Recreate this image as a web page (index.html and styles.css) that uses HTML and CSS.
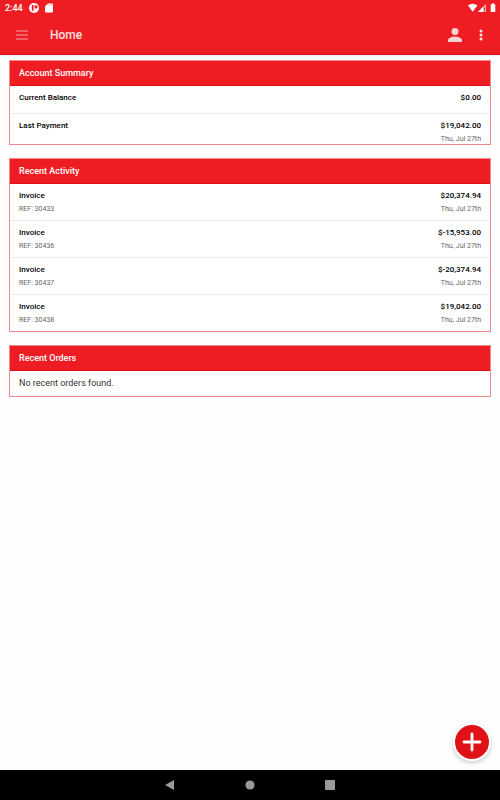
FILE: index.html
```html
<!DOCTYPE html>
<html lang="en">
<head>
<meta charset="utf-8">
<meta name="viewport" content="width=device-width, initial-scale=1">
<title>Home</title>
<link rel="stylesheet" href="styles.css">
</head>
<body>
<header class="top">
  <div class="status">
    <span class="time">2:44</span>
    <svg class="status-app" width="10" height="10" viewBox="0 0 10 10" aria-hidden="true"><circle cx="5" cy="5" r="5" fill="#fff"/><path d="M2.800 2h1.800v6A3 3 0 0 1 2.800 7zM5.600 2.200H7a1.700 1.700 0 0 1 0 3.400H5.600z" fill="#ee1d23"/></svg>
    <svg class="status-card" width="8" height="10" viewBox="0 0 8 10" aria-hidden="true"><path d="M3 .5h4a1 1 0 0 1 1 1v7a1 1 0 0 1-1 1H1a1 1 0 0 1-1-1v-5z" fill="#fff"/><path d="M3 1.500v1.500M4.800 1.500v1.500M6.500 1.500v1.500" stroke="#f6a0a2" stroke-width=".7"/></svg>
    <svg class="status-right" width="28" height="10" viewBox="0 0 28 10" aria-hidden="true">
      <path d="M0 2.600Q4.700-.9 9.400 2.600L4.700 8.800z" fill="#fff"/>
      <path d="M10 9 18 1v8z" fill="#f8b0b2"/><path d="M10 9l5-5v5z" fill="#fff"/><path d="M16.500 4.500v2M16.500 7.500v1" stroke="#8b3a3c" stroke-width="1"/>
      <path d="M24 .3h2v.9h1.300v7.800h-4.600V1.200H24z" fill="#fff"/>
    </svg>
  </div>
  <div class="bar">
    <button class="icon-btn" aria-label="Menu"><svg width="12" height="10" viewBox="0 0 12 10"><path d="M0 1h12M0 5h12M0 9h12" stroke="#f8a5a7" stroke-width="1"/></svg></button>
    <h1>Home</h1>
    <button class="icon-btn" aria-label="Account"><svg width="14" height="14" viewBox="0 0 14 14" fill="#fbd2d3"><circle cx="7" cy="3.500" r="3.500"/><path d="M0 14v-1.800C0 9.800 4.700 8.600 7 8.600s7 1.200 7 3.600V14z"/></svg></button>
    <button class="icon-btn" aria-label="More options"><svg width="4" height="12" viewBox="0 0 4 12" fill="#fde4e4"><circle cx="2" cy="2" r="1.500"/><circle cx="2" cy="6" r="1.500"/><circle cx="2" cy="10" r="1.500"/></svg></button>
  </div>
</header>
<main>
  <section class="card">
    <h2>Account Summary</h2>
    <div class="row single"><div class="line"><span>Current Balance</span><span>$0.00</span></div></div>
    <div class="row tight"><div class="line"><span>Last Payment</span><span>$19,042.00</span></div><div class="meta"><span></span><span>Thu, Jul 27th</span></div></div>
  </section>
  <section class="card">
    <h2>Recent Activity</h2>
    <div class="row"><div class="line"><span>Invoice</span><span>$20,374.94</span></div><div class="meta"><span>REF: 30433</span><span>Thu, Jul 27th</span></div></div>
    <div class="row"><div class="line"><span>Invoice</span><span>$-15,953.00</span></div><div class="meta"><span>REF: 30436</span><span>Thu, Jul 27th</span></div></div>
    <div class="row"><div class="line"><span>Invoice</span><span>$-20,374.94</span></div><div class="meta"><span>REF: 30437</span><span>Thu, Jul 27th</span></div></div>
    <div class="row"><div class="line"><span>Invoice</span><span>$19,042.00</span></div><div class="meta"><span>REF: 30438</span><span>Thu, Jul 27th</span></div></div>
  </section>
  <section class="card">
    <h2>Recent Orders</h2>
    <p>No recent orders found.</p>
  </section>
  <button class="fab" aria-label="Add"><svg width="20" height="20" viewBox="0 0 20 20"><path d="M10 2v16M2 10h16" stroke="#fff" stroke-width="2.800" stroke-linecap="round"/></svg></button>
</main>
<nav class="system" aria-label="System navigation">
  <button aria-label="Back"><svg width="10" height="10" viewBox="0 0 10 10"><path d="M9 0v10L0 5z" fill="#999"/></svg></button>
  <button aria-label="Home screen"><svg width="10" height="10" viewBox="0 0 10 10"><circle cx="5" cy="5" r="4.600" fill="#999"/></svg></button>
  <button aria-label="Recent apps"><svg width="10" height="10" viewBox="0 0 10 10"><rect width="10" height="10" rx=".8" fill="#999"/></svg></button>
</nav>
</body>
</html>
```
FILE: styles.css
```css
* { box-sizing: border-box; }
body {
  margin: 0;
  min-height: 100vh;
  display: flex;
  flex-direction: column;
  background: #fefefe;
  color: #111;
  font: 8px/10px Roboto, "Liberation Sans", sans-serif;
}
h1, h2, p { margin: 0; }
svg { display: block; }
button {
  display: flex;
  align-items: center;
  justify-content: center;
  border: 0;
  padding: 0;
  background: none;
}
.top {
  background: #ee1d23;
  border-bottom: 1px solid #e60d12;
  box-shadow: 0 1px 2px #d8eef0;
}
.status {
  display: flex;
  align-items: center;
  height: 15px;
  padding: 0 4px 0 5px;
}
.time { color: #fff; font-size: 9px; font-weight: 500; }
.status-app { margin-left: 6px; }
.status-card { margin-left: 6px; }
.status-right { margin-left: auto; }
.bar {
  display: flex;
  align-items: center;
  height: 39px;
  padding: 0 9px;
}
.icon-btn { width: 26px; height: 26px; }
.icon-btn:last-child { width: 20px; }
.icon-btn:nth-child(3) { margin-right: 3px; }
h1 {
  flex: 1;
  margin-left: 15px;
  color: #fde0e1;
  font-size: 12px;
  line-height: 16px;
  font-weight: 500;
}
main {
  position: relative;
  flex: 1;
  display: flex;
  flex-direction: column;
  gap: 13px;
  padding: 5px 9px;
}
.card { border: 1px solid #f18b8e; background: #fff; }
h2 {
  padding: 7px 9px;
  background: #ee1d23;
  border-bottom: 1px solid #e60d12;
  color: #fff;
  font-size: 9px;
  line-height: 10px;
  font-weight: 500;
}
.row { padding: 7px 9px 6px; border-bottom: 1px solid #eee; }
.row.single { padding-bottom: 10px; }
.row.tight { padding-bottom: 0; }
.row:last-child { border-bottom: 0; }
.line, .meta { display: flex; justify-content: space-between; }
.line { color: #000; font-weight: 500; }
.meta { margin-top: 3px; color: #666; font-size: 7px; }
.card p {
  padding: 7px 9px 8px;
  color: #333;
  font-size: 9px;
}
.fab {
  position: absolute;
  right: 9px;
  bottom: 9px;
  width: 38px;
  height: 38px;
  border: 2px solid #fff;
  border-radius: 50%;
  background: #e01217;
  box-shadow: 0 2px 4px #ccc;
}
.system {
  display: flex;
  justify-content: center;
  gap: 60px;
  height: 30px;
  background: #000;
}
.system button { width: 20px; height: 30px; }
```
